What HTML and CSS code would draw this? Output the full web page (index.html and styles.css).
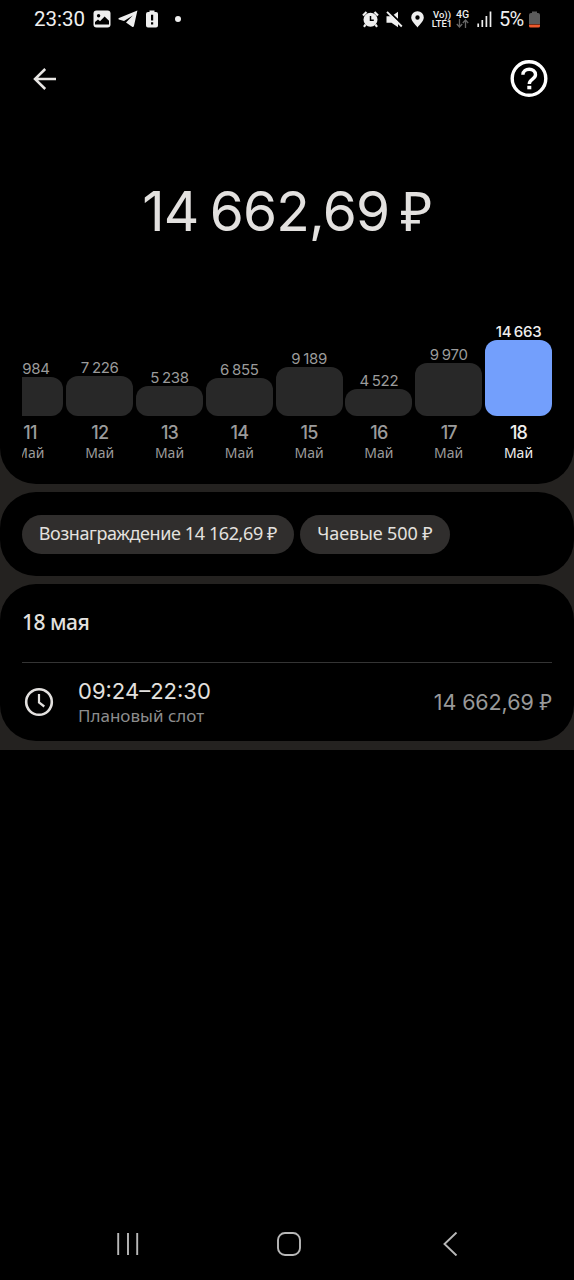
FILE: index.html
```html
<!DOCTYPE html>
<html lang="ru">
<head>
<meta charset="utf-8">
<title>Доход</title>
<link rel="stylesheet" href="styles.css">
</head>
<body>
<div class="phone">
  <header class="status">
    <div class="status-left">
      <span class="clock">23:30</span>
      <svg class="i-photo" width="18" height="18" viewBox="0 0 18 18"><rect x="0.5" y="0.5" width="17" height="17" rx="3" fill="#efefef"/><circle cx="5.600" cy="5.800" r="1.700" fill="#000"/><path d="M2 14.500V12l3-2.600 2 1.800 4.600-4.600 4.400 4.200v3.700z" fill="#000"/></svg>
      <svg class="i-plane" width="20" height="18" viewBox="0 0 20 18"><path d="M19.400.6 16 15.700q-.4 1.900-1.900 1.100L8 12.600 14.800 5.600 6 11 .8 9.400q-1-.6.2-1.300z" fill="#efefef"/></svg>
      <svg class="i-alert" width="12" height="18" viewBox="0 0 12 18"><path d="M3.500 2V.5h5V2H10q2 0 2 2v11.500q0 2-2 2H2q-2 0-2-2V4q0-2 2-2z" fill="#efefef"/><path d="M5 4.800h2.200v5.700H5zM5 12.200h2.200v2.200H5z" fill="#000"/></svg>
      <span class="dot"></span>
    </div>
    <div class="status-right">
      <svg width="17" height="17" viewBox="0 0 17 17"><circle cx="8.500" cy="8.800" r="7" fill="#efefef"/><path d="M1 4.500 4.500 1M16 4.500 12.500 1M3.500 13.500 2 15.800M13.500 13.500l1.500 2.300" stroke="#efefef" stroke-width="2.200"/><path d="M8.500 5v4.300h3.300" stroke="#000" stroke-width="1.500" fill="none"/></svg>
      <svg class="i-mute" width="17" height="17" viewBox="0 0 17 17"><path d="M.5 5.200h5L12 .8v15.500l-6.500-4.500h-5z" fill="#efefef"/><path d="M2.800.5 17 14" stroke="#000" stroke-width="2"/><path d="M1 .800 15.800 15.500" stroke="#efefef" stroke-width="1.900"/></svg>
      <svg class="i-pin" width="13" height="17" viewBox="0 0 13 17"><path fill-rule="evenodd" d="M6.500.3a6.200 6.200 0 0 1 6.300 6.200c0 3.700-4.300 7-6.300 10-2-3-6.300-6.300-6.300-10A6.200 6.200 0 0 1 6.500.3zm0 4a2.200 2.200 0 1 0 0 4.400 2.200 2.200 0 0 0 0-4.400z" fill="#efefef"/></svg>
      <span class="lte"><span>Vo))</span><span>LTE1</span></span>
      <span class="net"><span>4G</span><svg width="13" height="9" viewBox="0 0 13 9"><path d="M3.500 0v8M.8 5l2.700 3 2.700-3M9.500 9V1M6.800 4l2.700-3 2.700 3" stroke="#666" stroke-width="1.300" fill="none"/></svg></span>
      <svg class="i-signal" width="15" height="16" viewBox="0 0 15 16"><path d="M1.200 12.500V16M5.300 9v7M9.400 5v11M13.500.5V16" stroke="#efefef" stroke-width="1.700"/></svg>
      <span class="percent">5%</span>
      <svg class="i-battery" width="11" height="17" viewBox="0 0 11 17"><path d="M3 2V.5h5V2h1q2 0 2 2v9H0V4q0-2 2-2z" fill="#5b5b5b"/><path d="M0 13.500h11V15q0 1.500-1.500 1.500h-8Q0 16.500 0 15z" fill="#ee5a2d"/></svg>
    </div>
  </header>

  <main class="content">
    <section class="card summary">
      <nav class="toolbar">
        <svg width="24" height="24" viewBox="0 0 24 24"><path d="M12.200 2 2 12l10.200 10M2.300 12H23" fill="none" stroke="#e8e6e4" stroke-width="2.500"/></svg>
        <svg width="38" height="38" viewBox="0 0 38 38"><circle cx="19" cy="18.500" r="16.800" fill="none" stroke="#fff" stroke-width="3.400"/><path d="M12.900 14.800c0-7.400 12.600-7.400 12.600 0 0 4.300-6.200 4.400-6.200 9.200" fill="none" stroke="#fff" stroke-width="3.400"/><rect x="17.300" y="25.800" width="4" height="3.500" fill="#fff"/></svg>
      </nav>
      <h1 class="total">14 662,69 <span class="currency">₽</span></h1>
      <div class="chart">
        <div class="day"><span class="value">6 984</span><div class="bar" style="height:39px"></div><span class="num">11</span><span class="month">Май</span></div>
        <div class="day"><span class="value">7 226</span><div class="bar" style="height:40px"></div><span class="num">12</span><span class="month">Май</span></div>
        <div class="day"><span class="value">5 238</span><div class="bar" style="height:30px"></div><span class="num">13</span><span class="month">Май</span></div>
        <div class="day"><span class="value">6 855</span><div class="bar" style="height:38px"></div><span class="num">14</span><span class="month">Май</span></div>
        <div class="day"><span class="value">9 189</span><div class="bar" style="height:49px"></div><span class="num">15</span><span class="month">Май</span></div>
        <div class="day"><span class="value">4 522</span><div class="bar" style="height:27px"></div><span class="num">16</span><span class="month">Май</span></div>
        <div class="day"><span class="value">9 970</span><div class="bar" style="height:53px"></div><span class="num">17</span><span class="month">Май</span></div>
        <div class="day active"><span class="value">14 663</span><div class="bar" style="height:76px"></div><span class="num">18</span><span class="month">Май</span></div>
      </div>
    </section>

    <section class="card chips">
      <span class="chip reward">Вознаграждение 14 162,69 ₽</span>
      <span class="chip tips">Чаевые 500 ₽</span>
    </section>

    <section class="card details">
      <h2 class="date">18 мая</h2>
      <div class="slot">
        <svg class="slot-icon" width="34" height="34" viewBox="0 0 34 34"><circle cx="17" cy="17" r="12.800" fill="none" stroke="#e3e1df" stroke-width="2.600"/><path d="M17 9v8.500l5.300 4" fill="none" stroke="#e3e1df" stroke-width="2.200"/></svg>
        <div class="slot-text"><span class="time">09:24–22:30</span><span class="kind">Плановый слот</span></div>
        <span class="amount">14 662,69 <span class="currency">₽</span></span>
      </div>
    </section>
  </main>

  <footer class="navbar">
    <svg width="24" height="24" viewBox="0 0 24 24"><path d="M2.200 1v22M12 1v22M21.200 1v22" stroke="#b8b8b8" stroke-width="1.900"/></svg>
    <svg width="24" height="24" viewBox="0 0 24 24"><rect x="1" y="1" width="22" height="22" rx="7" fill="none" stroke="#b8b8b8" stroke-width="1.900"/></svg>
    <svg width="24" height="24" viewBox="0 0 24 24"><path d="M18.500.5 6.500 12l12 11.500" fill="none" stroke="#b8b8b8" stroke-width="1.900"/></svg>
  </footer>
</div>
</body>
</html>
```

FILE: styles.css
```css
* { box-sizing: border-box; }
body { margin: 0; background: #000; color: #e3e1df; font-family: "Noto Sans", "Open Sans", sans-serif; }
svg { display: block; flex: none; }
.phone { width: 574px; height: 1280px; display: flex; flex-direction: column; background: #000; }

.status { height: 40px; flex: none; padding: 0 34px 2px 34px; display: flex; align-items: center; justify-content: space-between; color: #efefef; font-family: Roboto, sans-serif; }
.status-left, .status-right { display: flex; align-items: center; }
.clock { width: 59px; font-size: 20.5px; white-space: nowrap; }
.i-plane { margin-left: 7px; }
.i-alert { margin-left: 8px; }
.dot { width: 6px; height: 6px; margin-left: 17px; border-radius: 50%; background: #efefef; }
.i-mute { margin-left: 7px; }
.i-pin { margin-left: 8px; }
.lte, .net { display: flex; flex-direction: column; align-items: center; font-weight: 500; line-height: 9px; }
.lte { width: 22px; margin-left: 7px; font-size: 9.5px; }
.net { width: 15px; margin-left: 2px; font-size: 10.5px; }
.i-signal { margin-left: 7px; }
.percent { width: 28px; margin-left: 7px; font-size: 20px; letter-spacing: -0.8px; }
.i-battery { margin-left: 2px; }

.content { display: flex; flex-direction: column; gap: 8px; padding-bottom: 9px; background: #242220; }
.card { background: #000; border-radius: 36px; }

.summary { height: 444px; border-radius: 0 0 36px 36px; }
.toolbar { height: 77px; padding: 0 26px 0 33px; display: flex; align-items: center; justify-content: space-between; }
.total { height: 110px; margin: 39px 0 0; font-family: Inter, "Noto Sans", sans-serif; font-size: 55px; line-height: 110px; font-weight: 400; text-align: center; white-space: nowrap; letter-spacing: -0.8px; word-spacing: -3.5px; }
.currency { font-family: "Noto Sans", sans-serif; line-height: 1; }
.chart { height: 196px; margin: 0 22px; display: flex; align-items: flex-end; justify-content: flex-end; gap: 2.8px; overflow: hidden; }
.day { width: 67px; flex: none; display: flex; flex-direction: column; align-items: center; color: #9b9b9b; white-space: nowrap; }
.value { font-family: Inter, "Noto Sans", sans-serif; font-size: 15px; line-height: 16px; letter-spacing: -0.3px; word-spacing: -1px; }
.bar { width: 67px; border-radius: 12px; background: #282828; }
.num { margin-top: 5px; font-family: Inter, "Noto Sans", sans-serif; font-size: 18px; line-height: 23px; font-weight: 500; letter-spacing: -0.8px; }
.month { font-size: 14px; line-height: 18px; }
.active { color: #efeeed; }
.active .value { font-weight: 500; }
.active .bar { background: #739ffc; }

.chips { height: 84px; padding: 0 22px; display: flex; align-items: center; gap: 6px; }
.chip { height: 39px; border-radius: 20px; background: #302e2d; font-size: 18px; line-height: 37px; text-align: center; white-space: nowrap; }
.reward { width: 272px; letter-spacing: -0.4px; }
.tips { width: 150px; letter-spacing: -0.1px; }

.details { height: 157px; padding: 0 22px; }
.date { height: 79px; margin: 0; border-bottom: 1px solid #343434; font-size: 21px; line-height: 76px; font-weight: 500; letter-spacing: -0.5px; }
.slot { height: 78px; display: flex; align-items: center; }
.slot-icon { width: 34px; }
.slot-text { margin-left: 22px; display: flex; flex-direction: column; gap: 2px; }
.time { font-family: Inter, "Noto Sans", sans-serif; font-size: 22px; line-height: 24px; letter-spacing: 0; }
.kind { font-size: 17px; line-height: 21px; color: #8d8d8d; }
.amount { margin-left: auto; font-family: Inter, "Noto Sans", sans-serif; font-size: 21.5px; color: #999; letter-spacing: -0.1px; }

.navbar { height: 72px; margin-top: auto; padding: 0 112px 0 116px; display: flex; align-items: center; justify-content: space-between; }
```
